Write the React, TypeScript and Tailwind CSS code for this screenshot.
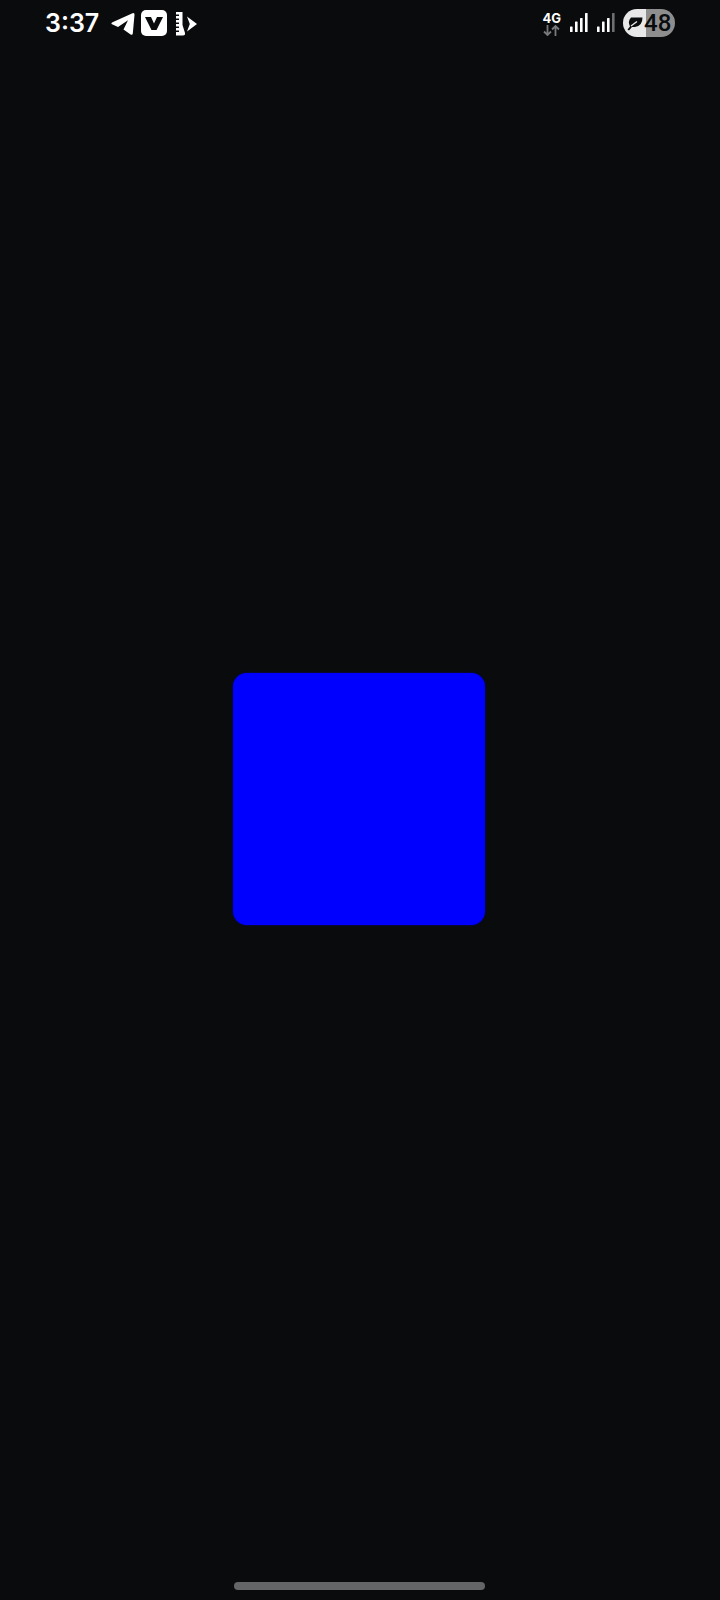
const Telegram = () => (
  <svg width="24" height="24" viewBox="0 0 24 24" fill="white">
    <path d="M0.5 12 Q0 11 1.5 10.2 L21.5 1.2 Q23.7 0.6 23.5 2.8 L21.8 21.5 Q21.5 23.6 19.6 22.4 L12.5 17.5 L17 8.2 L7 15 Z" />
  </svg>
);

const VBadge = () => (
  <div className="flex h-[26px] w-[26px] items-center justify-center rounded-[5px] bg-white">
    <svg width="18" height="13" viewBox="0 0 18 13">
      <path d="M0 0 H6 L9 6.5 L12 0 H18 L11.5 13 H6.5 Z" fill="#090b0d" />
    </svg>
  </div>
);

const ZipPlay = () => (
  <svg width="22" height="24" viewBox="0 0 22 24" fill="white">
    <rect x="1" y="0" width="3" height="2.5" />
    <rect x="1" y="4" width="3" height="2.5" />
    <rect x="1" y="8" width="3" height="2.5" />
    <rect x="1" y="12" width="3" height="2.5" />
    <rect x="1" y="16" width="3" height="2.5" />
    <rect x="1" y="20" width="3" height="3.5" />
    <path d="M4 0 H7.5 V13 L10 21 Q10.3 23.5 8 23.5 H4 Z" />
    <path d="M12 4.5 L22 12 L12 19.5 L14.8 12 Z" />
  </svg>
);

const Signal = ({ last }: { last: string }) => (
  <svg width="18" height="20" viewBox="0 0 18 20">
    <rect x="0" y="13.5" width="2.6" height="5.5" rx="0.6" fill="white" />
    <rect x="5" y="8.5" width="2.6" height="10.5" rx="0.6" fill="white" />
    <rect x="10" y="5" width="2.6" height="14" rx="0.6" fill="white" />
    <rect x="15" y="0" width="2.6" height="19" rx="0.6" fill={last} />
  </svg>
);

const DataArrows = () => (
  <svg width="17" height="11" viewBox="0 0 17 11" fill="none" stroke="#77797b" strokeWidth="1.8">
    <path d="M4.5 0 V10 M1 6.5 L4.5 10 L8 6.5" />
    <path d="M12.5 11 V1 M9 4.5 L12.5 1 L16 4.5" />
  </svg>
);

const Leaf = () => (
  <svg width="16" height="15" viewBox="0 0 16 15">
    <path d="M4 1.5 H15.5 Q15.5 10 8 11 H5 L2 14.5 L0.5 13.5 L3 10.5 Q0.5 5 4 1.5 Z" fill="#090b0d" />
    <path d="M4 10 L10 5.5" stroke="#e8e8e8" strokeWidth="1.3" fill="none" />
  </svg>
);

export default function App() {
  return (
    <div className="flex h-[1600px] w-[720px] flex-col bg-[#090b0d] font-['Inter',sans-serif] text-white">
      <div className="flex h-[46px] items-center justify-between pl-[45px] pr-[45px]">
        <div className="flex items-center">
          <span className="mt-[1px] text-[25px] font-semibold leading-none">3:37</span>
          <div className="ml-[12px] flex items-center">
            <div className="mt-[1px]">
              <Telegram />
            </div>
            <div className="ml-[6px]">
              <VBadge />
            </div>
            <div className="ml-[8px] mt-[1px]">
              <ZipPlay />
            </div>
          </div>
        </div>
        <div className="flex items-center">
          <div className="mt-[2px] flex flex-col items-center">
            <span className="text-[13px] font-bold leading-[13px]">4G</span>
            <DataArrows />
          </div>
          <div className="ml-[9px] flex gap-[9px]">
            <Signal last="white" />
            <Signal last="#6d6f71" />
          </div>
          <div className="ml-[8px] flex h-[28px] w-[52px] items-center overflow-hidden rounded-full bg-[linear-gradient(90deg,#e8e8e8_0%,#e8e8e8_45%,#8e8e8e_45%,#8e8e8e_100%)] pl-[4px] text-[#090b0d]">
            <Leaf />
            <span className="ml-[1px] font-['Roboto',sans-serif] text-[24px] font-medium leading-none">48</span>
          </div>
        </div>
      </div>
      <div className="flex flex-1 items-start justify-center pt-[627px]">
        <div className="ml-[-2px] h-[252px] w-[252px] rounded-[14px] bg-[#0000ff] shadow-[0_0_2px_#0000ff99]" />
      </div>
      <div className="flex justify-center pb-[10px]">
        <div className="ml-[-1px] h-[8px] w-[251px] rounded-full bg-[#646567]" />
      </div>
    </div>
  );
}
